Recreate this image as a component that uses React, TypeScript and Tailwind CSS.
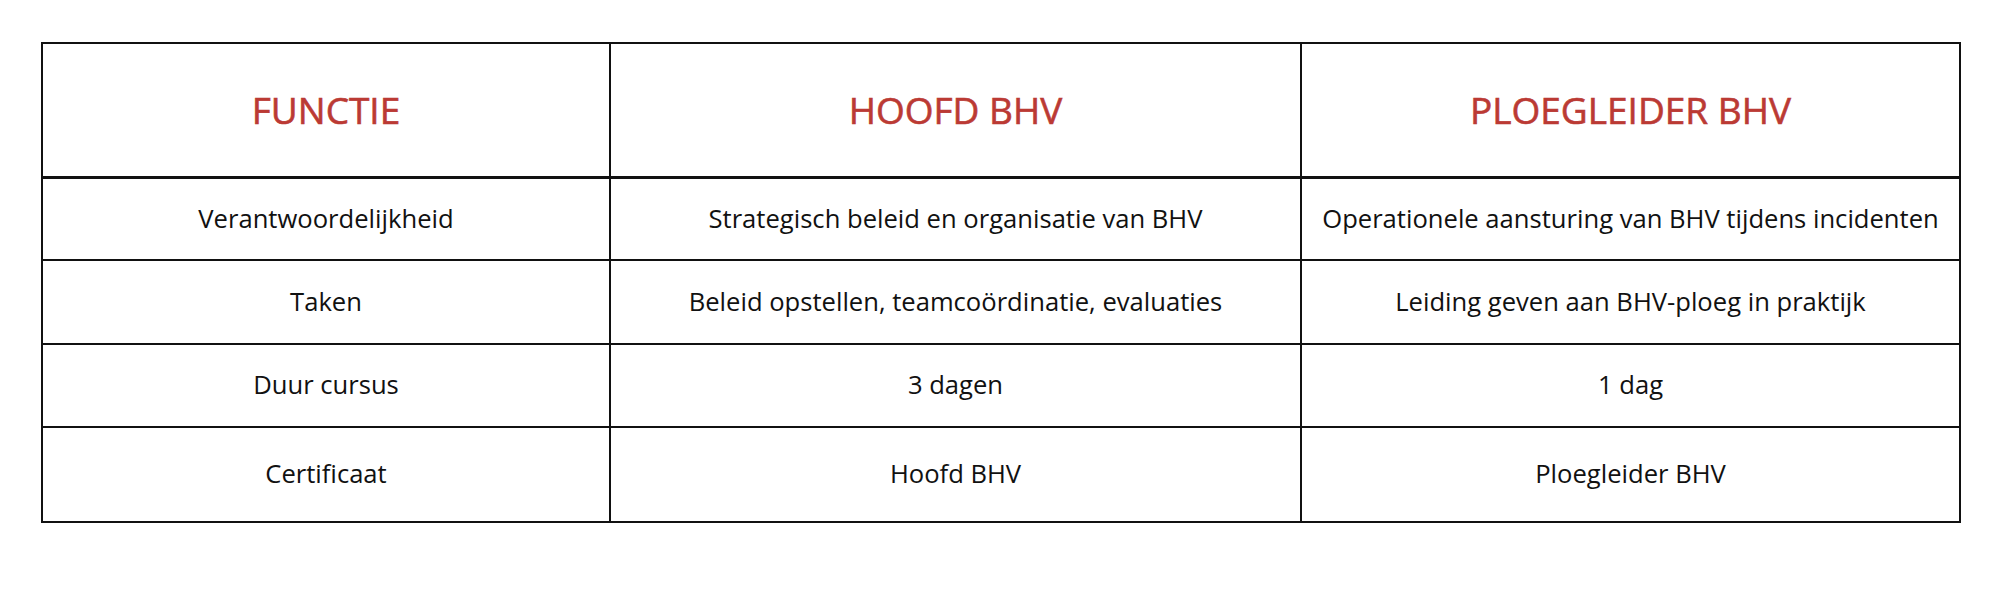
const rows = [
  {
    label: "Verantwoordelijkheid",
    hoofd: "Strategisch beleid en organisatie van BHV",
    ploeg: "Operationele aansturing van BHV tijdens incidenten",
    h: "h-[83px]",
  },
  {
    label: "Taken",
    hoofd: "Beleid opstellen, teamcoördinatie, evaluaties",
    ploeg: "Leiding geven aan BHV-ploeg in praktijk",
    h: "h-[84px]",
  },
  { label: "Duur cursus", hoofd: "3 dagen", ploeg: "1 dag", h: "h-[83px]" },
  { label: "Certificaat", hoofd: "Hoofd BHV", ploeg: "Ploegleider BHV", h: "h-[95px]" },
];

export default function App() {
  return (
    <div className="min-h-[600px] w-[2000px] bg-white pl-[41px] pt-[42px] font-['Open_Sans',sans-serif]">
      <table className="w-[1918px] table-fixed border-collapse border-2 border-[#111]">
        <colgroup>
          <col className="w-[568px]" />
          <col className="w-[691px]" />
          <col className="w-[659px]" />
        </colgroup>
        <thead>
          <tr className="h-[134px]">
            {["FUNCTIE", "HOOFD BHV", "PLOEGLEIDER BHV"].map((t) => (
              <th
                key={t}
                className="border-2 border-b-[3px] border-[#111] text-center align-middle text-[37px] font-normal text-[#bb3a34] [-webkit-text-stroke:0.6px_#bb3a34]"
              >
                {t}
              </th>
            ))}
          </tr>
        </thead>
        <tbody>
          {rows.map((r) => (
            <tr key={r.label} className={r.h}>
              {[r.label, r.hoofd, r.ploeg].map((c, i) => (
                <td
                  key={i}
                  className="whitespace-nowrap border-2 border-[#111] text-center align-middle text-[25.6px] text-[#111]"
                >
                  {c}
                </td>
              ))}
            </tr>
          ))}
        </tbody>
      </table>
    </div>
  );
}
